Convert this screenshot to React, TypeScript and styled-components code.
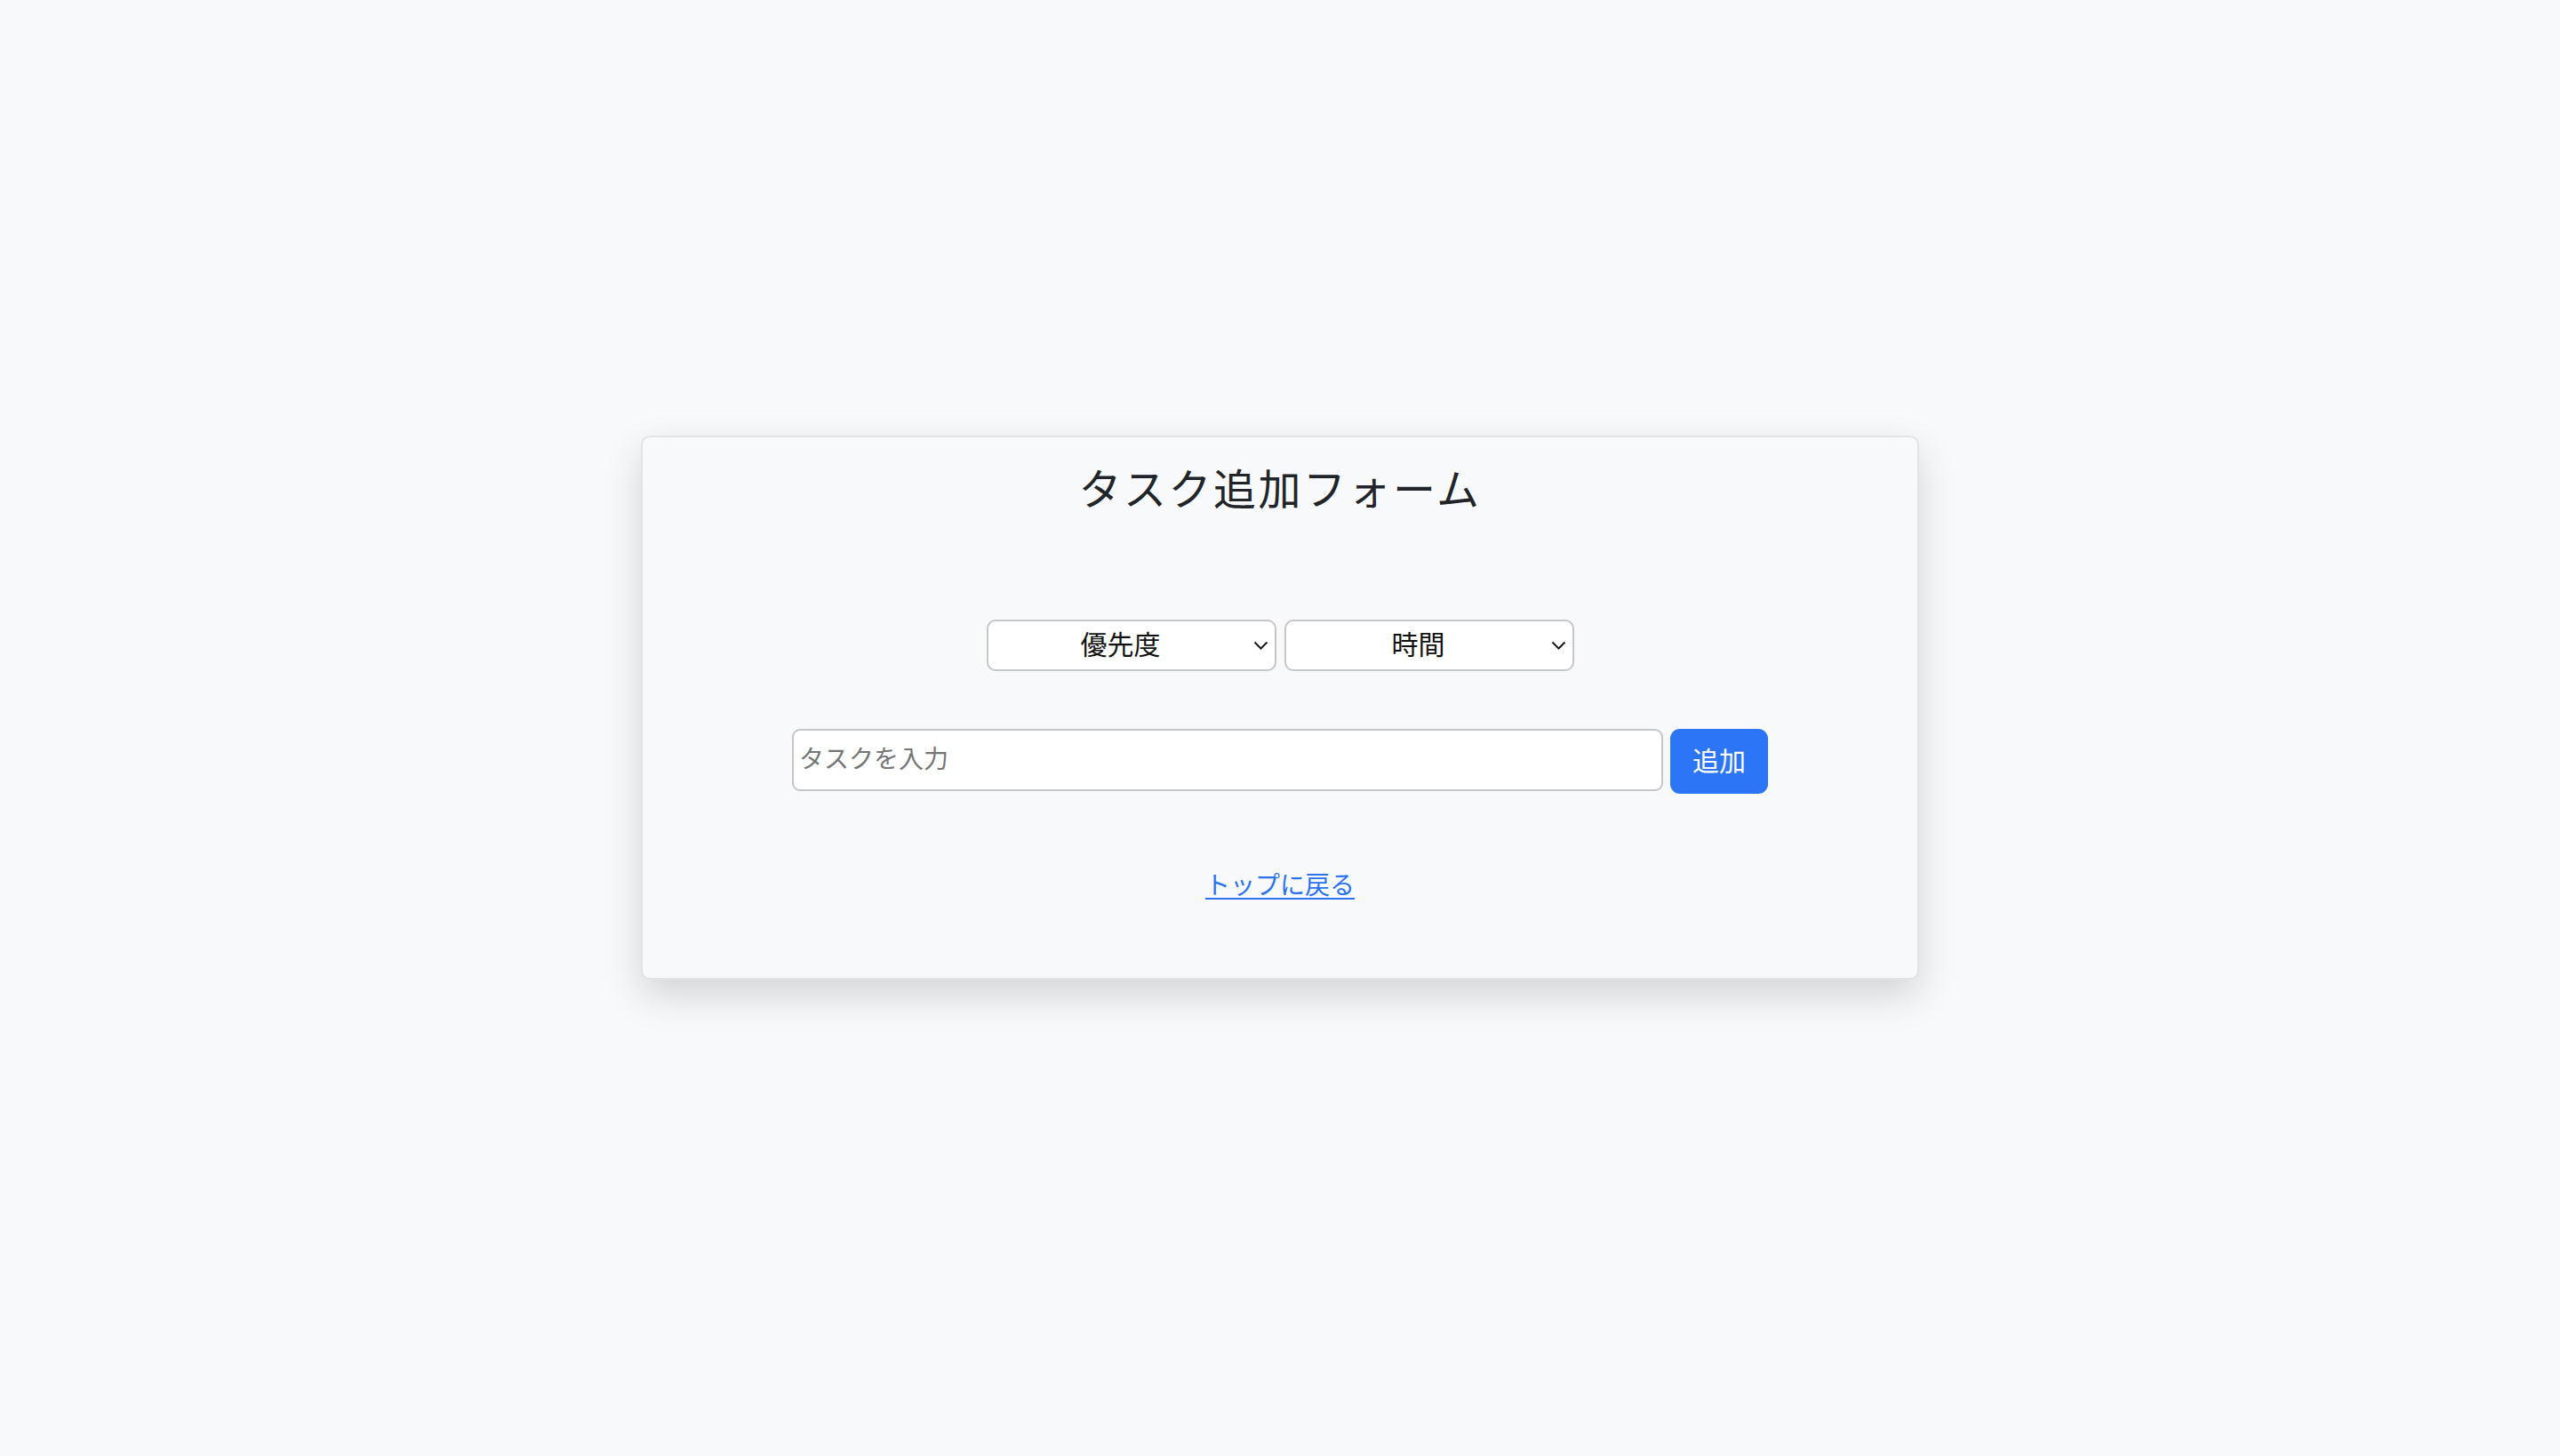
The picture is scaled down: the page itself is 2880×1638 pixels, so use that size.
import React from "react";
import styled, { createGlobalStyle } from "styled-components";

const GlobalStyle = createGlobalStyle`
  html, body {
    margin: 0;
    padding: 0;
    background: #f8f9fa;
  }
  body {
    font-family: "Noto Sans CJK JP", "Noto Sans", sans-serif;
    color: #212529;
  }
  * { box-sizing: border-box; }
`;

const Page = styled.div`
  min-height: 1638px;
  display: flex;
  justify-content: center;
  align-items: flex-start;
  padding-top: 490px;
`;

const Card = styled.div`
  width: 1438px;
  height: 612px;
  background: #f8f9fa;
  border: 2px solid #e1e3e6;
  border-radius: 10px;
  box-shadow: 0 18px 44px rgba(0, 0, 0, 0.15);
  display: flex;
  flex-direction: column;
  align-items: center;
  padding-top: 26px;
`;

const Title = styled.h2`
  margin: 0;
  font-size: 48px;
  line-height: 58px;
  font-weight: 400;
  color: #212529;
  letter-spacing: 2.5px;
`;

const SelectRow = styled.div`
  display: flex;
  gap: 9px;
  margin-top: 121px;
`;

const SelectWrap = styled.span`
  position: relative;
  display: inline-flex;
`;

const Select = styled.select`
  appearance: none;
  -webkit-appearance: none;
  width: 326px;
  height: 58px;
  background: #ffffff;
  border: 2px solid #c6c6c8;
  border-radius: 10px;
  font-family: inherit;
  font-size: 30px;
  color: #111;
  text-align: center;
  text-align-last: center;
  padding: 0 26px 6px 2px;
  outline: none;
`;

const Chevron = styled.svg`
  position: absolute;
  right: 9px;
  top: 50%;
  width: 17px;
  height: 10px;
  margin-top: -5px;
  pointer-events: none;
`;

const InputRow = styled.div`
  display: flex;
  align-items: flex-start;
  gap: 8px;
  margin-top: 65px;
`;

const TaskInput = styled.input`
  width: 980px;
  height: 70px;
  background: #ffffff;
  border: 2px solid #c6c6c8;
  border-radius: 9px;
  padding: 0 6px 6px;
  font-family: inherit;
  font-size: 28px;
  color: #111;
  outline: none;
  &::placeholder {
    color: #767676;
  }
`;

const AddButton = styled.button`
  height: 73px;
  width: 110px;
  background: #2b75f6;
  border: none;
  border-radius: 11px;
  color: #ffffff;
  font-family: inherit;
  font-size: 30px;
  padding: 0 0 6px;
  cursor: pointer;
`;

const BackLink = styled.a`
  margin-top: 80px;
  font-size: 28px;
  line-height: 42px;
  color: #2b72f0;
  text-decoration: underline;
  text-underline-offset: 4px;
  text-decoration-thickness: 2px;
`;

const ChevronIcon = () => (
  <Chevron viewBox="0 0 17 10" fill="none">
    <path d="M1.5 1.5 L8.5 8.5 L15.5 1.5" stroke="#1a1a1a" strokeWidth="2" />
  </Chevron>
);

export default function App() {
  return (
    <>
      <GlobalStyle />
      <Page>
        <Card>
          <Title>タスク追加フォーム</Title>
          <SelectRow>
            <SelectWrap>
              <Select defaultValue="">
                <option value="">優先度</option>
                <option value="high">高</option>
                <option value="mid">中</option>
                <option value="low">低</option>
              </Select>
              <ChevronIcon />
            </SelectWrap>
            <SelectWrap>
              <Select defaultValue="">
                <option value="">時間</option>
                <option value="30">30分</option>
                <option value="60">1時間</option>
              </Select>
              <ChevronIcon />
            </SelectWrap>
          </SelectRow>
          <InputRow>
            <TaskInput placeholder="タスクを入力" />
            <AddButton>追加</AddButton>
          </InputRow>
          <BackLink href="#">トップに戻る</BackLink>
        </Card>
      </Page>
    </>
  );
}
